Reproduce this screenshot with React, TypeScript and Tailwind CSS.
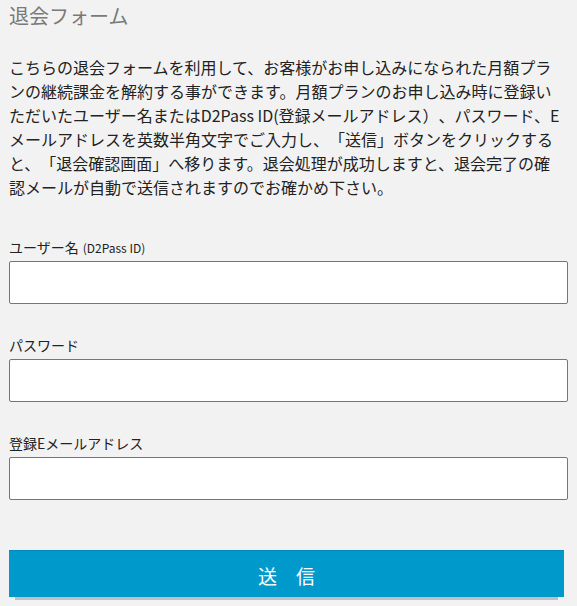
export default function App() {
  const fields = [
    { label: "ユーザー名", note: "(D2Pass ID)", type: "text" },
    { label: "パスワード", note: "", type: "password" },
    { label: "登録Eメールアドレス", note: "", type: "email" },
  ];

  return (
    <div
      className="min-h-[606px] w-full bg-[#f2f2f2] pl-[9px] pr-[9px] text-[#333] [text-spacing-trim:space-all]"
      style={{ fontFamily: '"Noto Sans CJK JP", "Noto Sans", sans-serif' }}
    >
      <h2 className="pt-[1px] text-[20px] leading-[30px] font-normal text-[#7a7a7a]">
        退会フォーム
      </h2>
      <p className="mt-[24px] whitespace-nowrap text-[16px] leading-[24px] text-[#222]">
        こちらの退会フォームを利用して、お客様がお申し込みになられた月額プラ
        <br />
        ンの継続課金を解約する事ができます。月額プランのお申し込み時に登録い
        <br />
        ただいたユーザー名またはD2Pass ID(登録メールアドレス）、パスワード、E
        <br />
        メールアドレスを英数半角文字でご入力し、「送信」ボタンをクリックする
        <br />
        と、「退会確認画面」へ移ります。退会処理が成功しますと、退会完了の確
        <br />
        認メールが自動で送信されますのでお確かめ下さい。
      </p>
      <form className="mt-[38px]" onSubmit={(e) => e.preventDefault()}>
        {fields.map((field, index) => (
          <div key={index} className={index > 0 ? "mt-[31px]" : ""}>
            <label className="mb-[3px] block text-[14px] leading-[21px] text-[#222]">
              {field.label}
              {field.note && (
                <span className="ml-[4px] text-[12px]">{field.note}</span>
              )}
            </label>
            <input
              type={field.type}
              className="block h-[43px] w-[559px] rounded-[2px] border border-[#767676] bg-white px-2 text-[16px] outline-none"
            />
          </div>
        ))}
        <button
          type="submit"
          className="mt-[50px] block h-[47px] w-[555px] border-t border-[#0088bb] bg-[#0099cc] pt-[4px] text-[19px] leading-[28px] text-white shadow-[0_9px_0_-6px_#c0c0c0]"
        >
          送　信
        </button>
      </form>
    </div>
  );
}
